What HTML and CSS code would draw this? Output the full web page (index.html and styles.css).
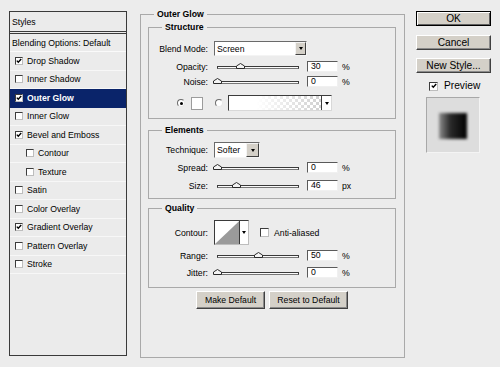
FILE: index.html
```html
<!DOCTYPE html>
<html>
<head>
<meta charset="utf-8">
<title>Layer Style</title>
<link rel="stylesheet" href="styles.css">
</head>
<body>
<div class="dialog">
  <div class="styles-panel">
    <div class="sp-head">Styles</div>
    <div class="sp-row sp-blend">Blending Options: Default</div>
    <div class="sp-row"><span class="cb"><svg viewBox="0 0 6 6" width="6" height="6"><path d="M0.8 2.6 L2.3 4.3 L5.2 1" /></svg></span>Drop Shadow</div>
    <div class="sp-row"><span class="cb"></span>Inner Shadow</div>
    <div class="sp-row sel"><span class="cb"><svg viewBox="0 0 6 6" width="6" height="6"><path d="M0.8 2.6 L2.3 4.3 L5.2 1" /></svg></span>Outer Glow</div>
    <div class="sp-row"><span class="cb"></span>Inner Glow</div>
    <div class="sp-row"><span class="cb"><svg viewBox="0 0 6 6" width="6" height="6"><path d="M0.8 2.6 L2.3 4.3 L5.2 1" /></svg></span>Bevel and Emboss</div>
    <div class="sp-row sub"><span class="cb"></span>Contour</div>
    <div class="sp-row sub"><span class="cb"></span>Texture</div>
    <div class="sp-row"><span class="cb"></span>Satin</div>
    <div class="sp-row"><span class="cb"></span>Color Overlay</div>
    <div class="sp-row"><span class="cb"><svg viewBox="0 0 6 6" width="6" height="6"><path d="M0.8 2.6 L2.3 4.3 L5.2 1" /></svg></span>Gradient Overlay</div>
    <div class="sp-row"><span class="cb"></span>Pattern Overlay</div>
    <div class="sp-row"><span class="cb"></span>Stroke</div>
  </div>

  <fieldset class="outer">
    <legend>Outer Glow</legend>

    <fieldset class="group structure">
      <legend>Structure</legend>
      <div class="row r-blend">
        <span class="lbl">Blend Mode:</span>
        <div class="select sel-blend"><span class="sel-text">Screen</span><span class="sel-btn"></span></div>
      </div>
      <div class="row r-slide r-opacity">
        <span class="lbl">Opacity:</span>
        <div class="slider"><div class="track"></div><svg class="thumb" style="--v:0.29" viewBox="0 0 9 6" width="9" height="6"><polygon points="0.5,5.5 0.5,3 4.5,0.5 8.5,3 8.5,5.5"/></svg></div>
        <div class="field">30</div><span class="unit">%</span>
      </div>
      <div class="row r-slide r-noise">
        <span class="lbl">Noise:</span>
        <div class="slider"><div class="track"></div><svg class="thumb" style="--v:0.01" viewBox="0 0 9 6" width="9" height="6"><polygon points="0.5,5.5 0.5,3 4.5,0.5 8.5,3 8.5,5.5"/></svg></div>
        <div class="field">0</div><span class="unit">%</span>
      </div>
      <div class="row r-color">
        <span class="radio on"></span>
        <span class="swatch"></span>
        <span class="radio r2"></span>
        <div class="grad"><span class="grad-fill"></span><span class="grad-btn"></span></div>
      </div>
    </fieldset>

    <fieldset class="group elements">
      <legend>Elements</legend>
      <div class="row r-tech">
        <span class="lbl">Technique:</span>
        <div class="select sel-tech"><span class="sel-text">Softer</span><span class="sel-btn"></span></div>
      </div>
      <div class="row r-slide r-spread">
        <span class="lbl">Spread:</span>
        <div class="slider"><div class="track"></div><svg class="thumb" style="--v:0" viewBox="0 0 9 6" width="9" height="6"><polygon points="0.5,5.5 0.5,3 4.5,0.5 8.5,3 8.5,5.5"/></svg></div>
        <div class="field">0</div><span class="unit">%</span>
      </div>
      <div class="row r-slide r-size">
        <span class="lbl">Size:</span>
        <div class="slider"><div class="track"></div><svg class="thumb" style="--v:0.24" viewBox="0 0 9 6" width="9" height="6"><polygon points="0.5,5.5 0.5,3 4.5,0.5 8.5,3 8.5,5.5"/></svg></div>
        <div class="field">46</div><span class="unit">px</span>
      </div>
    </fieldset>

    <fieldset class="group quality">
      <legend>Quality</legend>
      <div class="row r-contour">
        <span class="lbl">Contour:</span>
        <div class="contour"><svg class="contour-img" viewBox="0 0 25 23" width="25" height="23" preserveAspectRatio="none"><rect width="25" height="23" fill="#fff"/><polygon points="0,23 25,0 25,23" fill="#9a9a9a"/></svg><span class="contour-btn"></span></div>
        <span class="cb big"></span><span class="aa">Anti-aliased</span>
      </div>
      <div class="row r-slide r-range">
        <span class="lbl">Range:</span>
        <div class="slider"><div class="track"></div><svg class="thumb" style="--v:0.5" viewBox="0 0 9 6" width="9" height="6"><polygon points="0.5,5.5 0.5,3 4.5,0.5 8.5,3 8.5,5.5"/></svg></div>
        <div class="field">50</div><span class="unit">%</span>
      </div>
      <div class="row r-slide r-jitter">
        <span class="lbl">Jitter:</span>
        <div class="slider"><div class="track"></div><svg class="thumb" style="--v:0" viewBox="0 0 9 6" width="9" height="6"><polygon points="0.5,5.5 0.5,3 4.5,0.5 8.5,3 8.5,5.5"/></svg></div>
        <div class="field">0</div><span class="unit">%</span>
      </div>
    </fieldset>

    <div class="btn-row">
      <div class="btn b-make">Make Default</div>
      <div class="btn b-reset">Reset to Default</div>
    </div>
  </fieldset>

  <div class="side">
    <div class="btn side-btn ok">OK</div>
    <div class="btn side-btn">Cancel</div>
    <div class="btn side-btn">New Style...</div>
    <div class="preview-row"><span class="cb pcb"><svg viewBox="0 0 6 6" width="6" height="6"><path d="M0.8 2.6 L2.3 4.3 L5.2 1" /></svg></span><span>Preview</span></div>
    <div class="preview"><div class="preview-sq"></div></div>
  </div>
</div>
</body>
</html>
```

FILE: styles.css
```css
html, body {
  margin: 0;
  padding: 0;
}
body {
  width: 500px;
  height: 367px;
  overflow: hidden;
  background: #ececec;
  font-family: "Liberation Sans", Arial, sans-serif;
  font-size: 8.7px;
  color: #000;
}
.dialog {
  display: flex;
  align-items: flex-start;
  padding: 9px 0 0 9px;
  box-sizing: border-box;
  height: 367px;
}

/* ---------- left styles list ---------- */
.styles-panel {
  width: 118px;
  height: 345px;
  margin-top: 2px;
  box-sizing: border-box;
  border: 1px solid #3a3a3a;
  background: #ebebeb;
  flex: none;
}
.sp-head {
  height: 22px;
  box-sizing: border-box;
  border-bottom: 3px double #3a3a3a;
  padding: 5px 0 0 2px;
  line-height: 10px;
}
.sp-row {
  height: 18.5px;
  box-sizing: border-box;
  border-bottom: 1px solid #f7f7f7;
  display: flex;
  align-items: center;
  padding-left: 5px;
  line-height: 10px;
  white-space: nowrap;
}
.sp-blend {
  height: 18px;
  padding-left: 2px;
  border-bottom-color: #fafafa;
}
.sp-row.sub {
  padding-left: 16px;
}
.sp-row.sel {
  background: #0a246a;
  color: #fff;
  font-weight: bold;
  border-bottom-color: #0a246a;
}
.cb {
  display: inline-flex;
  align-items: center;
  justify-content: center;
  width: 8px;
  height: 8px;
  box-sizing: border-box;
  border: 1px solid;
  border-color: #3c3c3c #bdbdbd #bdbdbd #3c3c3c;
  background: #fff;
  margin-right: 4px;
  flex: none;
}
.cb svg {
  display: block;
}
.cb svg path {
  fill: none;
  stroke: #000;
  stroke-width: 1.4;
}
.cb.big {
  width: 9px;
  height: 9px;
  margin: 0 5px 0 11px;
}

/* ---------- main fieldset ---------- */
fieldset {
  margin: 0;
  min-width: 0;
  box-sizing: border-box;
  border: 1px solid #a9a9a9;
}
legend {
  font-weight: bold;
  line-height: 10px;
  padding: 0 3px;
}
.outer {
  width: 265px;
  height: 349px;
  margin-left: 13px;
  padding: 3px 8px 0 7px;
  flex: none;
}
.outer > legend {
  margin-left: 6px;
}
.group {
  padding: 0;
}
.group > legend {
  margin-left: 13px;
}
.structure { padding-bottom: 7px; }
.elements { margin-top: 6px; padding-bottom: 7px; }
.quality { margin-top: 4px; padding-bottom: 9px; }

.row {
  display: flex;
  align-items: center;
  line-height: 10px;
}
.lbl {
  width: 59px;
  margin-right: 6px;
  text-align: right;
  white-space: nowrap;
  flex: none;
}
.r-blend { margin-top: 9px; height: 15px; }
.r-opacity { margin-top: 5px; }
.r-noise { margin-top: 4px; }
.r-color { margin-top: 8px; height: 16px; padding-left: 28px; }
.r-tech { margin-top: 7px; height: 16px; }
.r-spread { margin-top: 4px; }
.r-size { margin-top: 7px; }
.r-contour { margin-top: 7px; height: 25px; }
.r-range { margin-top: 5px; }
.r-jitter { margin-top: 6px; }
.r-slide { height: 11px; }

/* select boxes */
.select {
  display: flex;
  box-sizing: border-box;
  border: 1px solid;
  border-color: #6a6a6a #f4f4f4 #f4f4f4 #6a6a6a;
  background: #fff;
  height: 100%;
}
.sel-blend { width: 93px; }
.sel-tech { width: 46px; }
.sel-text {
  flex: 1;
  padding: 0 0 0 2px;
  display: flex;
  align-items: center;
}
.sel-btn {
  width: 11px;
  box-sizing: border-box;
  background: #d4d0c8;
  border: 1px solid;
  border-color: #f4f4f4 #404040 #404040 #f4f4f4;
  display: flex;
  align-items: center;
  justify-content: center;
}
.sel-tech .sel-btn { width: 13px; }
.sel-btn::after,
.grad-btn::after,
.contour-btn::after {
  content: "";
  border-left: 2.5px solid transparent;
  border-right: 2.5px solid transparent;
  border-top: 3px solid #000;
}

/* sliders */
.slider {
  position: relative;
  width: 88px;
  height: 11px;
  flex: none;
}
.track {
  margin: 5px 3px 0;
  height: 3px;
  box-sizing: border-box;
  border: 1px solid #3a3a3a;
  border-bottom-color: #777;
  background: #fafafa;
}
.thumb {
  position: absolute;
  top: 2px;
  left: calc(3px + var(--v) * 82px - 4.5px);
  display: block;
}
.thumb polygon {
  fill: #f4f4f4;
  stroke: #2a2a2a;
  stroke-width: 1;
}
.field {
  width: 31px;
  height: 11px;
  box-sizing: border-box;
  margin-left: 5px;
  border: 1px solid;
  border-color: #5a5a5a #f0f0f0 #f0f0f0 #5a5a5a;
  background: #fff;
  padding-left: 3px;
  line-height: 9px;
  flex: none;
}
.unit {
  margin-left: 4px;
}

/* color row */
.radio {
  width: 8px;
  height: 8px;
  box-sizing: border-box;
  border-radius: 50%;
  border: 1px solid;
  border-color: #6c6c6c #e8e8e8 #e8e8e8 #6c6c6c;
  background: #fff;
  display: flex;
  align-items: center;
  justify-content: center;
  flex: none;
}
.radio.on::after {
  content: "";
  width: 3px;
  height: 3px;
  border-radius: 50%;
  background: #000;
}
.radio.r2 { margin-left: 12px; }
.swatch {
  width: 12px;
  height: 13px;
  box-sizing: border-box;
  margin-left: 6px;
  border: 1px solid #9c9c9c;
  background: #fff;
  flex: none;
}
.grad {
  display: flex;
  width: 104px;
  height: 16px;
  margin-left: 5px;
  box-sizing: border-box;
  border: 1px solid;
  border-color: #3c3c3c #d8d8d8 #d8d8d8 #3c3c3c;
}
.grad-fill {
  flex: 1;
  background:
    linear-gradient(to right, #fff 0%, #fff 30%, rgba(255,255,255,0) 100%),
    repeating-conic-gradient(#d0d0d0 0% 25%, #fff 0% 50%) 0 0 / 6px 6px;
}
.grad-btn {
  width: 9px;
  background: #fff;
  border-left: 1px solid #3c3c3c;
  display: flex;
  align-items: center;
  justify-content: center;
}

/* contour */
.contour {
  display: flex;
  width: 35px;
  height: 25px;
  box-sizing: border-box;
  border: 1px solid;
  border-color: #3a3a3a #bdbdbd #bdbdbd #3a3a3a;
  background: #fff;
  flex: none;
}
.contour-img {
  display: block;
}
.contour-btn {
  width: 8px;
  border-left: 1px solid #3a3a3a;
  display: flex;
  align-items: center;
  justify-content: center;
}
.aa { white-space: nowrap; }

/* buttons */
.btn {
  box-sizing: border-box;
  background: #d4d0c8;
  border: 1px solid;
  border-color: #ffffff #404040 #404040 #ffffff;
  box-shadow: inset -1px -1px 0 #8a8a8a;
  display: flex;
  align-items: center;
  justify-content: center;
  white-space: nowrap;
}
.btn-row {
  display: flex;
  justify-content: center;
  gap: 4px;
  margin-top: 3px;
}
.btn-row .btn { height: 18px; padding-bottom: 1px; }
.b-make { width: 69px; }
.b-reset { width: 79px; }

/* right side */
.side {
  width: 76px;
  margin-left: 11px;
  padding-top: 2px;
  font-size: 10.2px;
  flex: none;
}
.side-btn {
  width: 75px;
  height: 15px;
  margin-bottom: 8px;
  line-height: 11px;
}
.side-btn.ok {
  border-color: #000;
  box-shadow: inset 1px 1px 0 #fff, inset -1px -1px 0 #606060;
  margin-bottom: 9px;
}
.preview-row {
  display: flex;
  align-items: center;
  padding-left: 13px;
  margin-top: 8px;
  height: 10px;
  line-height: 10px;
}
.cb.pcb {
  width: 9px;
  height: 9px;
  margin-right: 6px;
}
.preview {
  width: 54px;
  height: 56px;
  margin: 6px 0 0 10px;
  box-sizing: border-box;
  background: #dddddd;
  border: 1px solid;
  border-color: #a8a8a8 #f4f4f4 #f4f4f4 #a8a8a8;
  padding: 15px 0 0 12px;
}
.preview-sq {
  width: 28px;
  height: 26px;
  background: linear-gradient(to right, #8c8c8c 0%, #2a2a2a 40%, #000 100%);
  filter: blur(1.6px);
}
```
